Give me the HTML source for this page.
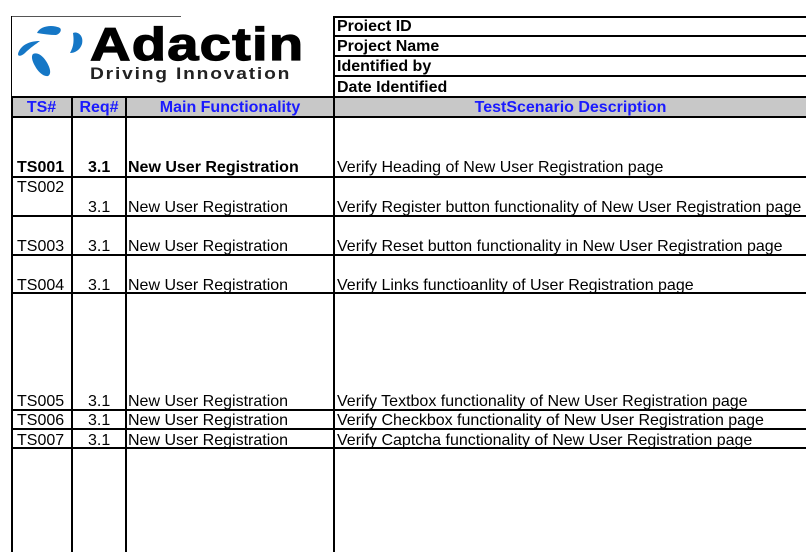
<!DOCTYPE html>
<html><head><meta charset="utf-8"><style>
body{margin:0;width:806px;height:552px;background:#fff;position:relative;overflow:hidden;font-family:"Liberation Sans",Arial,sans-serif;font-size:16px;color:#000}
.h{position:absolute;background:#000;height:2px}
.v{position:absolute;background:#000;width:2px}
.t{position:absolute;white-space:nowrap;line-height:17px}
.b{font-weight:bold}
.c{text-align:center}
.blue{color:#1a1aff;font-weight:bold}
</style></head><body>
<div style="position:absolute;left:12px;top:97px;width:794px;height:20px;background:#c8c8c8"></div>
<!-- logo -->
<svg style="position:absolute;left:12px;top:18px" width="80" height="70" viewBox="12 18 80 70">
<g fill="#1577c6">
<path d="M37 33 C40 26 52 24 60 28 C62 30 60 34 56 35 C50 35 43 34 37 33Z"/>
<path d="M73 33 C78 31 84 36 82 44 C80 50 75 53 70 53 C74 46 74 40 73 33Z"/>
<path d="M18 54 C20 46 28 41 40 41 C36 44 30 48 25 53 C22 56 18 57 18 54Z"/>
<path d="M33 54 C37 52 42 55 46 61 C50 67 52 74 48 76 C44 77 38 72 35 66 C32 61 31 56 33 54Z"/>
</g></svg>
<div class="t b" style="left:90px;top:20px;font-size:46px;line-height:48px;letter-spacing:1px;transform:scaleX(1.22);transform-origin:0 0;-webkit-text-stroke:1.2px #000">Adactin</div>
<div class="t b" style="left:90px;top:64px;font-size:17px;line-height:20px;letter-spacing:1.6px;color:#222;transform:scaleX(1.13);transform-origin:0 0">Driving Innovation</div>
<!-- lines -->
<div class="h" style="left:11px;top:16px;width:170px;height:1px;background:#555"></div>
<div class="h" style="left:333px;top:16px;width:473px"></div>
<div class="h" style="left:333px;top:35px;width:473px"></div>
<div class="h" style="left:333px;top:55px;width:473px"></div>
<div class="h" style="left:333px;top:75px;width:473px"></div>
<div class="h" style="left:11px;top:96px;width:795px"></div>
<div class="h" style="left:11px;top:116px;width:795px"></div>
<div class="h" style="left:11px;top:176px;width:795px"></div>
<div class="h" style="left:11px;top:215px;width:795px"></div>
<div class="h" style="left:11px;top:254px;width:795px"></div>
<div class="h" style="left:11px;top:292px;width:795px"></div>
<div class="h" style="left:11px;top:409px;width:795px"></div>
<div class="h" style="left:11px;top:428px;width:795px"></div>
<div class="h" style="left:11px;top:447px;width:795px"></div>
<div class="v" style="left:11px;top:16px;height:536px;width:1px"></div>
<div class="v" style="left:11px;top:96px;height:456px"></div>
<div class="v" style="left:71px;top:96px;height:456px"></div>
<div class="v" style="left:125px;top:96px;height:456px"></div>
<div class="v" style="left:333px;top:16px;height:536px"></div>
<!-- header info -->
<div class="t b" style="left:337px;top:18px">Proiect ID</div>
<div class="t b" style="left:337px;top:38px">Project Name</div>
<div class="t b" style="left:337px;top:58px">Identified by</div>
<div class="t b" style="left:337px;top:79px">Date Identified</div>
<div class="t blue c" style="left:12px;width:59px;top:99px">TS#</div>
<div class="t blue c" style="left:73px;width:52px;top:99px">Req#</div>
<div class="t blue c" style="left:127px;width:206px;top:99px">Main Functionality</div>
<div class="t blue c" style="left:335px;width:471px;top:99px">TestScenario Description</div>
<!-- rows -->
<div class="t b" style="left:17px;top:159px">TS001</div>
<div class="t b" style="left:88px;top:159px">3.1</div>
<div class="t b" style="left:128px;top:159px">New User Registration</div>
<div class="t" style="left:337px;top:159px">Verify Heading of New User Registration page</div>
<div class="t" style="left:17px;top:179px">TS002</div>
<div class="t" style="left:88px;top:199px">3.1</div>
<div class="t" style="left:128px;top:199px">New User Registration</div>
<div class="t" style="left:337px;top:199px">Verify Register button functionality of New User Registration page</div>
<div class="t" style="left:17px;top:238px">TS003</div>
<div class="t" style="left:88px;top:238px">3.1</div>
<div class="t" style="left:128px;top:238px">New User Registration</div>
<div class="t" style="left:337px;top:238px">Verify Reset button functionality in New User Registration page</div>
<div class="t" style="left:17px;top:277px">TS004</div>
<div class="t" style="left:88px;top:277px">3.1</div>
<div class="t" style="left:128px;top:277px">New User Registration</div>
<div class="t" style="left:337px;top:277px">Verify Links functioanlity of User Registration page</div>
<div class="t" style="left:17px;top:393px">TS005</div>
<div class="t" style="left:88px;top:393px">3.1</div>
<div class="t" style="left:128px;top:393px">New User Registration</div>
<div class="t" style="left:337px;top:393px">Verify Textbox functionality of New User Registration page</div>
<div class="t" style="left:17px;top:412px">TS006</div>
<div class="t" style="left:88px;top:412px">3.1</div>
<div class="t" style="left:128px;top:412px">New User Registration</div>
<div class="t" style="left:337px;top:412px">Verify Checkbox functionality of New User Registration page</div>
<div class="t" style="left:17px;top:432px">TS007</div>
<div class="t" style="left:88px;top:432px">3.1</div>
<div class="t" style="left:128px;top:432px">New User Registration</div>
<div class="t" style="left:337px;top:432px">Verify Captcha functionality of New User Registration page</div>
</body></html>
